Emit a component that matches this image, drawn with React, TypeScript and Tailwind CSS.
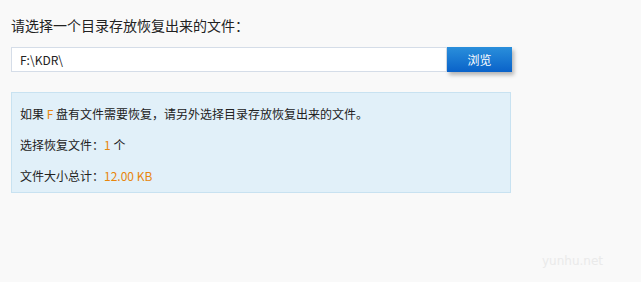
import React, { useState } from 'react';

const font = { fontFamily: '"Noto Sans CJK SC", "Noto Sans", sans-serif' };

export default function App() {
  const [path, setPath] = useState('F:\\KDR\\');

  return (
    <div
      className="relative h-[282px] w-[641px] overflow-hidden bg-[#f9f9f9] text-[#333]"
      style={font}
    >
      <div className="px-[11px] pt-[15px]">
        <h3 className="text-[14px] leading-[20px] font-normal text-[#222]">
          请选择一个目录存放恢复出来的文件：
        </h3>

        <div className="mt-[12px] flex h-[25px] w-[501px]">
          <input
            type="text"
            value={path}
            onChange={(e) => setPath(e.target.value)}
            className="h-full flex-1 border border-[#d5dde8] bg-white px-[8px] text-[12px] text-[#222] outline-none"
            style={font}
          />
          <button
            type="button"
            className="h-full w-[65px] bg-gradient-to-b from-[#2a8fdb] to-[#0a62c9] text-[12px] text-white shadow-[2px_3px_4px_rgba(0,0,0,0.28)] cursor-pointer"
          >
            浏览
          </button>
        </div>

        <div className="mt-[20px] h-[101px] w-[500px] border border-[#c8e2f1] bg-[#e1f0f9] px-[8px] pt-[12px] text-[12px] leading-[18px] text-[#222]">
          <p>
            如果 <span className="text-[#e8860c]">F</span> 盘有文件需要恢复，请另外选择目录存放恢复出来的文件。
          </p>
          <p className="mt-[13px]">
            选择恢复文件：<span className="text-[#e8860c]">1</span> 个
          </p>
          <p className="mt-[13px]">
            文件大小总计：<span className="text-[#e8860c]">12.00 KB</span>
          </p>
        </div>
      </div>

      <div className="absolute left-[542px] top-[252px] text-[12px] text-[#eaeaea]" style={{ fontFamily: '"DejaVu Sans", sans-serif' }}>
        yunhu.net
      </div>
    </div>
  );
}
